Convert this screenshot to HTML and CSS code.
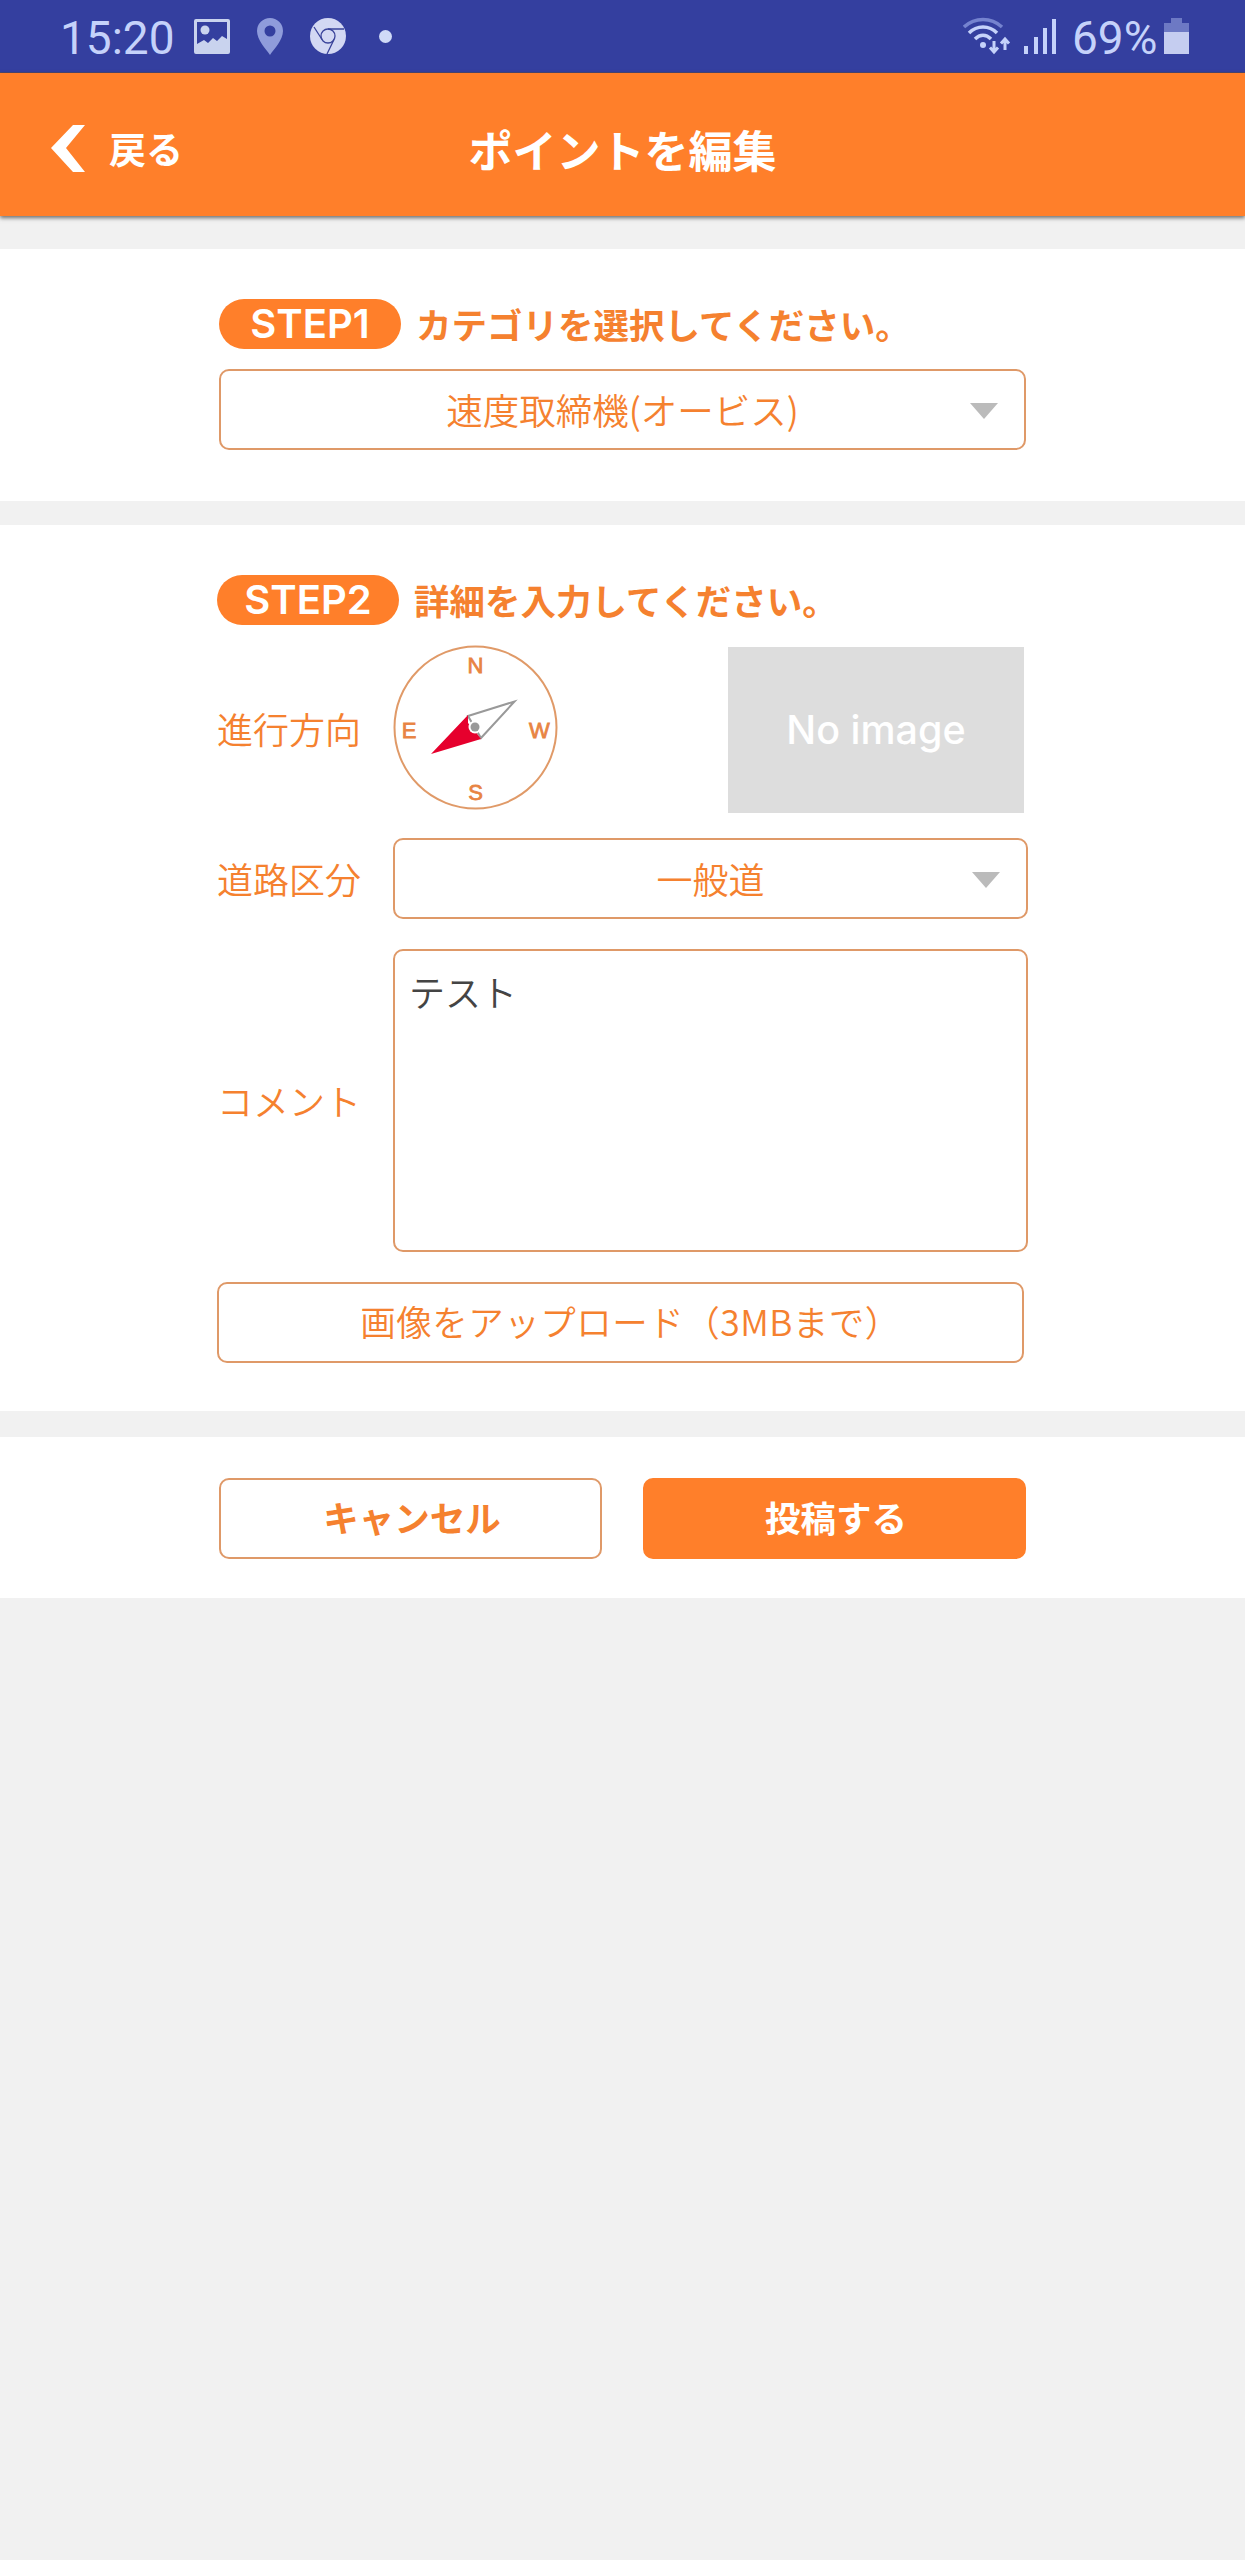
FILE: index.html
```html
<!DOCTYPE html>
<html lang="ja">
<head>
    <meta charset="UTF-8">
    <meta name="viewport" content="width=device-width, initial-scale=1.0">
    <title>ポイントを編集</title>
    <link rel="stylesheet" href="styles.css">
</head>
<body>
    <div class="statusbar">
        <span class="clock">15:20</span>
        <svg class="icon-photo" width="36" height="35" viewBox="0 0 36 35">
            <path fill="#c9d3ee" fill-rule="evenodd" d="M2 0h32a2 2 0 0 1 2 2v31a2 2 0 0 1-2 2H2a2 2 0 0 1-2-2V2a2 2 0 0 1 2-2zM3 3v22l7-4 4 3 5-5 4 3 5-5 5 3V3z"/>
            <circle cx="11" cy="11" r="4.5" fill="#c9d3ee"/>
        </svg>
        <svg class="icon-pin" width="26" height="37" viewBox="0 0 26 37">
            <path fill="#8f9cdb" fill-rule="evenodd" d="M13 0a13 13 0 0 1 13 13c0 9-9 18-13 24C9 31 0 22 0 13A13 13 0 0 1 13 0zm0 7.500a5.500 5.500 0 1 0 0 11 5.500 5.500 0 0 0 0-11z"/>
        </svg>
        <svg class="icon-chrome" width="36" height="36" viewBox="0 0 36 36">
            <circle cx="18" cy="18" r="18" fill="#d3d8f3"/>
            <g fill="none" stroke="#3a439a" stroke-width="1.300">
                <circle cx="18" cy="18" r="7"/>
                <path d="M18 11h16M12 21.500L4 9M24 21.500L17 36"/>
            </g>
        </svg>
        <span class="dot"></span>
        <svg class="icon-wifi" width="48" height="38" viewBox="0 0 48 38">
            <g fill="none" stroke-width="3.500">
                <path stroke="#7583cf" d="M1 10C12 0 28 0 39 10"/>
                <path stroke="#c5d2fa" d="M6 16C14 8 26 8 34 16"/>
                <path stroke="#c5d2fa" d="M12 22C17 17 23 17 28 22"/>
            </g>
            <circle cx="20" cy="28" r="3" fill="#c5d2fa"/>
            <path fill="none" stroke="#c5d2fa" stroke-width="3" d="M31 24v11M27 30.500l4 4.500 4-4.500M42 33V22M38 26.500l4-4.500 4 4.500"/>
        </svg>
        <svg class="icon-signal" width="33" height="35" viewBox="0 0 33 35">
            <path fill="#c5d2fa" d="M0 27h4v8H0zM10 18h4v17h-4zM19 9h4v26h-4zM28 0h4v35h-4z"/>
        </svg>
        <span class="percent">69%</span>
        <svg class="icon-battery" width="25" height="36" viewBox="0 0 25 36">
            <path fill="#6d79c4" d="M7 0h11v5h7v10H0V5h7z"/>
            <path fill="#c5cdf0" d="M0 14h25v22H0z"/>
        </svg>
    </div>

    <header class="header">
        <a class="back">
            <svg width="34" height="47" viewBox="0 0 34 47">
                <path fill="#fff" d="M22 0h12L15 23l19 24H22L0 23z"/>
            </svg>
            戻る
        </a>
        <h1>ポイントを編集</h1>
    </header>

    <section class="step step1">
        <div class="step-title"><span class="badge">STEP1</span>カテゴリを選択してください。</div>
        <div class="field select">速度取締機(オービス)<i class="arrow"></i></div>
    </section>

    <section class="step step2">
        <div class="step-title"><span class="badge">STEP2</span>詳細を入力してください。</div>

        <div class="row row-direction">
            <label>進行方向</label>
            <svg class="compass" width="165" height="165" viewBox="0 0 165 165">
                <circle cx="82.500" cy="82.500" r="81" fill="#fff" stroke="#e09a68" stroke-width="2"/>
                <text x="82.500" y="28">N</text>
                <text x="16" y="93">E</text>
                <text x="146.500" y="93">W</text>
                <text x="82.500" y="155">S</text>
                <path fill="#fff" stroke="#999" stroke-width="2" d="M75 71l46.500-14.500L88 93z"/>
                <path fill="#e6002d" d="M75 70L38 109l50-15-6-8-7-8z"/>
                <circle cx="82" cy="82" r="6.500" fill="#fff"/>
                <circle cx="82" cy="82" r="4.500" fill="#999"/>
            </svg>
            <div class="noimage">No image</div>
        </div>

        <div class="row row-road">
            <label>道路区分</label>
            <div class="field select">一般道<i class="arrow"></i></div>
        </div>

        <div class="row row-comment">
            <label>コメント</label>
            <div class="field comment">テスト</div>
        </div>

        <div class="field upload">画像をアップロード（3MBまで）</div>
    </section>

    <section class="actions">
        <div class="field cancel">キャンセル</div>
        <div class="field submit">投稿する</div>
    </section>
</body>
</html>
```
FILE: styles.css
```css
* {
    box-sizing: border-box;
}
body {
    margin: 0;
    min-height: 2560px;
    background-color: #f1f1f1;
    color: #f5812f;
    font-family: "Noto Sans CJK JP", sans-serif;
    font-size: 36px;
    font-weight: 350;
    line-height: 1;
}

/* status bar */
.statusbar {
    display: flex;
    align-items: flex-start;
    height: 73px;
    padding-left: 60px;
    background-color: #343f9f;
    border-bottom: 1px solid #4d4872;
    color: #c5d2fa;
    font-family: Roboto, sans-serif;
    font-size: 46px;
    font-weight: 400;
}
.statusbar svg {
    flex: none;
}
.clock {
    width: 134px;
    margin-top: 15px;
}
.icon-photo {
    margin-top: 19px;
}
.icon-pin {
    margin: 18px 0 0 27px;
}
.icon-chrome {
    margin: 18px 0 0 27px;
}
.dot {
    width: 13px;
    height: 13px;
    margin: 30px 0 0 33px;
    border-radius: 50%;
    background-color: #cfdaf7;
}
.icon-wifi {
    margin: 17px 0 0 571px;
}
.icon-signal {
    margin: 19px 0 0 13px;
}
.percent {
    width: 92px;
    margin: 15px 0 0 15px;
}
.icon-battery {
    margin-top: 18px;
}

/* header */
.header {
    display: grid;
    grid-template-columns: 1fr auto 1fr;
    align-items: center;
    height: 143px;
    padding-left: 51px;
    padding-right: 51px;
    padding-top: 8px;
    background-color: #ff7f2a;
    box-shadow: 0 2px 4px rgba(0, 0, 0, 0.55);
    color: #fff;
}
.back {
    display: flex;
    align-items: center;
    gap: 24px;
    font-size: 37px;
    font-weight: 600;
}
.header h1 {
    margin: 0;
    font-size: 44px;
    font-weight: bold;
}

/* sections */
.step, .actions {
    background-color: #fff;
}
.step1 {
    height: 252px;
    margin-top: 33px;
    padding: 50px 219px 0 219px;
}
.step2 {
    height: 886px;
    margin-top: 24px;
    padding: 50px 217px 0 217px;
}
.step-title {
    display: flex;
    align-items: center;
    height: 50px;
    font-size: 35.5px;
    font-weight: bold;
    white-space: nowrap;
}
.badge {
    width: 182px;
    height: 50px;
    margin-right: 15px;
    border-radius: 25px;
    background-color: #ff7f2a;
    color: #fff;
    font-family: Inter, sans-serif;
    font-size: 40px;
    font-weight: 600;
    line-height: 50px;
    text-align: center;
}

/* fields */
.field {
    display: flex;
    align-items: center;
    justify-content: center;
    height: 81px;
    padding-bottom: 2px;
    border: 2px solid #df9968;
    border-radius: 10px;
    background-color: #fff;
}
.select {
    position: relative;
}
.step1 .select {
    margin-top: 20px;
    padding-top: 4px;
    font-size: 36.5px;
}
.arrow {
    position: absolute;
    right: 26px;
    top: 32px;
    border: 14px solid transparent;
    border-top: 16px solid #bbb;
    border-bottom: 0;
}
.row {
    display: grid;
    grid-template-columns: 176px 635px;
    align-items: center;
}
.row label {
    padding-bottom: 2px;
}
.row-direction {
    grid-template-columns: 176px 335px 296px;
    height: 167px;
    margin-top: 20px;
}
.row-road {
    margin-top: 26px;
}
.row-comment {
    margin-top: 30px;
}
.compass {
    margin-bottom: 3px;
}
.compass text {
    fill: #e88443;
    font-family: "Liberation Sans", sans-serif;
    font-size: 22px;
    text-anchor: middle;
    stroke: #e88443;
    stroke-width: 0.8;
}
.noimage {
    height: 166px;
    margin-top: 1px;
    background-color: #ddd;
    color: #fff;
    font-family: Inter, sans-serif;
    font-size: 39.5px;
    font-weight: 500;
    line-height: 166px;
    text-align: center;
}
.comment {
    align-items: flex-start;
    justify-content: flex-start;
    height: 303px;
    padding: 22px 14px;
    color: #444;
}
.upload {
    width: 807px;
    margin-top: 30px;
    padding-left: 20px;
    padding-bottom: 4px;
    font-size: 35.5px;
    letter-spacing: 0.5px;
}

/* buttons */
.actions {
    display: flex;
    gap: 41px;
    height: 161px;
    margin-top: 26px;
    padding: 41px 219px 0 219px;
    font-size: 35.5px;
    font-weight: bold;
}
.actions .field {
    width: 383px;
    padding-left: 3px;
    padding-bottom: 4px;
}
.actions .submit {
    border-color: #ff7f2a;
    background-color: #ff7f2a;
    color: #fff;
}
```
